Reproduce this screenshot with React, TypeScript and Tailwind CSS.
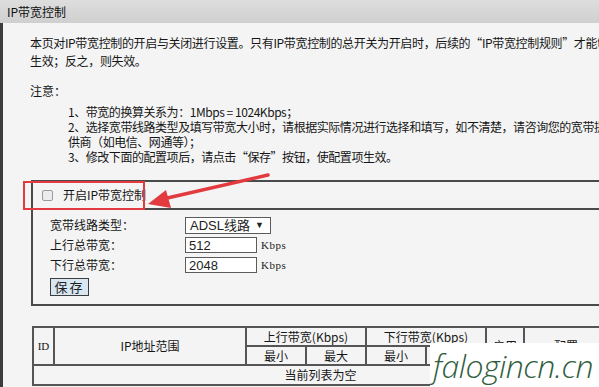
import React from 'react'

const FONT = "font-['Noto_Sans_CJK_SC',sans-serif]"

function FormRow({ label, children }: { label: string; children: React.ReactNode }) {
  return (
    <div className="flex h-[20px] items-center">
      <span className="w-[135px] shrink-0 leading-[20px]">{label}</span>
      {children}
    </div>
  )
}

function BandwidthInput({ value }: { value: string }) {
  return (
    <div className="flex items-center">
      <input
        readOnly
        defaultValue={value}
        className="h-[16px] w-[72px] border border-[#5b5b5b] bg-white pl-[3px] font-['Liberation_Sans',sans-serif] text-[13px] leading-[14px] text-[#222] outline-none"
      />
      <span className="ml-[4px] font-['Liberation_Serif',serif] text-[11px] tracking-[0.5px] text-[#222]">Kbps</span>
    </div>
  )
}

export default function App() {
  const th = 'border-2 border-[#555] p-0 text-center font-normal'
  return (
    <div className={`relative h-[387px] w-[599px] overflow-hidden bg-[#f4f4f4] text-[12px] text-[#161616] ${FONT}`}>
      {/* title bar */}
      <div className="h-[23px] bg-gradient-to-b from-[#dedede] to-[#cfcfcf] pl-[7px] leading-[24px] text-[12px] text-[#111]">
        IP带宽控制
      </div>

      <div className="flex h-[364px] flex-col border-l-[3px] border-[#3c3c3c]">
        {/* description */}
        <div className="whitespace-nowrap pl-[27px] pt-[11px] leading-[18px] tracking-[-0.35px]">
          <p>本页对IP带宽控制的开启与关闭进行设置。只有IP带宽控制的总开关为开启时，后续的“IP带宽控制规则”才能够</p>
          <p>生效；反之，则失效。</p>
        </div>

        <p className="mt-[12px] pl-[27px] leading-[18px]">注意：</p>
        <div className="mt-[4px] whitespace-nowrap pl-[65px] leading-[15px] tracking-[-0.45px]">
          <p>1、带宽的换算关系为：1Mbps = 1024Kbps；</p>
          <p>2、选择宽带线路类型及填写带宽大小时，请根据实际情况进行选择和填写，如不清楚，请咨询您的宽带提</p>
          <p>供商（如电信、网通等）；</p>
          <p>3、修改下面的配置项后，请点击“保存”按钮，使配置项生效。</p>
        </div>

        {/* settings box */}
        <div className="ml-[28px] mt-[16px] w-[600px] shrink-0 border-y-2 border-l-2 border-[#4a4a4a]">
          <div className="flex h-[28px] items-center border-b-2 border-[#4a4a4a] pl-[9px]">
            <span className="h-[11px] w-[11px] rounded-[2px] border border-[#9a9a9a] bg-[#ececec]" />
            <span className="ml-[10px]">开启IP带宽控制</span>
          </div>
          <div className="flex flex-col pb-[8px] pl-[17px] pt-[5px]">
            <FormRow label="宽带线路类型：">
              <div className="flex h-[17px] w-[86px] items-center justify-between border border-[#5b5b5b] bg-white pl-[4px] pr-[6px] font-['Liberation_Sans','Noto_Sans_CJK_SC',sans-serif] text-[13px] leading-[15px] text-[#222]">
                <span>ADSL线路</span>
                <span className="text-[9px]">▼</span>
              </div>
            </FormRow>
            <FormRow label="上行总带宽：">
              <BandwidthInput value="512" />
            </FormRow>
            <FormRow label="下行总带宽：">
              <BandwidthInput value="2048" />
            </FormRow>
            <button className="mt-[3px] h-[18px] w-[39px] border border-[#3d3d3d] bg-[#d8e7f2] text-[13px] leading-[16px] tracking-[2px] text-[#222]">
              保存
            </button>
          </div>
        </div>

        {/* rule table */}
        <table className="ml-[29px] mt-[20px] w-[575px] table-fixed border-collapse border-2 border-[#555] leading-[16px]">
          <colgroup>
            <col className="w-[21px]" />
            <col className="w-[192px]" />
            <col className="w-[60px]" />
            <col className="w-[60px]" />
            <col className="w-[60px]" />
            <col className="w-[60px]" />
            <col className="w-[38px]" />
            <col className="w-[84px]" />
          </colgroup>
          <thead>
            <tr className="h-[19px]">
              <th rowSpan={2} className={`${th} font-['Liberation_Serif',serif] text-[11px]`}>ID</th>
              <th rowSpan={2} className={th}>IP地址范围</th>
              <th colSpan={2} className={th}>上行带宽(Kbps)</th>
              <th colSpan={2} className={th}>下行带宽(Kbps)</th>
              <th rowSpan={2} className={th}>启用</th>
              <th rowSpan={2} className={th}>配置</th>
            </tr>
            <tr className="h-[19px]">
              <th className={th}>最小</th>
              <th className={th}>最大</th>
              <th className={th}>最小</th>
              <th className={th}>最大</th>
            </tr>
          </thead>
          <tbody>
            <tr className="h-[20px]">
              <td colSpan={8} className="border-2 border-[#555] text-center">当前列表为空</td>
            </tr>
          </tbody>
        </table>
      </div>

      {/* annotation */}
      <div className="absolute left-[23px] top-[181px] h-[29px] w-[122px] border-2 border-[#e23a3f]" />
      <svg className="pointer-events-none absolute left-0 top-0" width="599" height="387">
        <line x1="268" y1="175" x2="163" y2="199" stroke="#e23a3f" strokeWidth="3.5" strokeLinecap="round" />
        <polygon points="148,204 166,190 171,208" fill="#e23a3f" />
      </svg>

      {/* watermark */}
      <div className="absolute left-[430px] top-[343px] flex h-[44px] w-[169px] items-end overflow-hidden bg-white pb-[6px] pl-[3px] font-['Open_Sans',sans-serif] text-[32px] font-light italic leading-[30px] tracking-[-0.5px] text-[#2f5e3d]">
        falogincn.cn
      </div>
    </div>
  )
}
